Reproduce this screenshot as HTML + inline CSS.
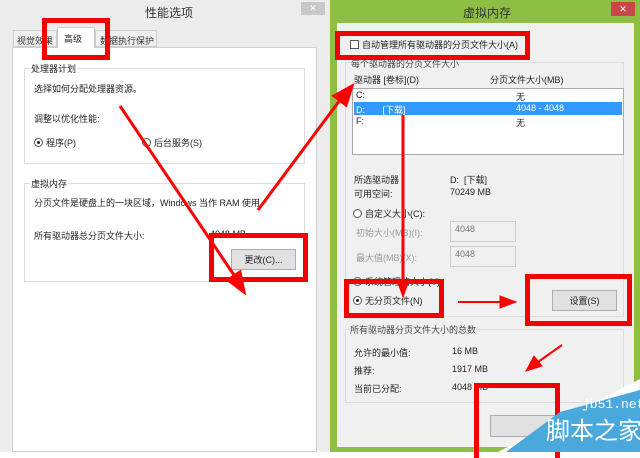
<!DOCTYPE html>
<html><head><meta charset="utf-8"><style>
*{margin:0;padding:0;box-sizing:border-box}
body{width:640px;height:452px;overflow:hidden;position:relative;background:#fff;font-family:"Liberation Sans","Noto Sans CJK SC",sans-serif;font-size:9px;color:#222}
.a{position:absolute;white-space:nowrap}
.gb{position:absolute;border:1px solid #dcdcdc}
.btn{position:absolute;background:#e1e1e1;border:1px solid #adadad;text-align:center;line-height:20px}
.rad{position:absolute;width:9px;height:9px;border:1px solid #555;border-radius:50%;background:#fff}
.rad.on::after{content:"";position:absolute;left:2px;top:2px;width:3px;height:3px;border-radius:50%;background:#222}
.red{position:absolute;border:5px solid #f20000}
.inp{position:absolute;border:1px solid #ccc;background:#f0f0f0;color:#777;padding:2px 4px}
</style></head><body>
<div class="a" style="left:0;top:0;width:330px;height:452px;background:#ececec"></div>
<div class="a" style="left:145px;top:4px;font-size:12px;color:#333">性能选项</div>
<div class="a" style="left:301px;top:2px;width:24px;height:13px;background:#c8c8c8;color:#fff;text-align:center;font-size:9px;line-height:13px">✕</div>
<div class="a" style="left:13px;top:30px;width:44px;height:17px;border:1px solid #ccc;background:#f0f0f0;padding:3px 3px;color:#333">视觉效果</div>
<div class="a" style="left:95px;top:30px;width:62px;height:17px;border:1px solid #ccc;background:#f0f0f0;padding:3px 4px;color:#333">数据执行保护</div>
<div class="a" style="left:12px;top:47px;width:305px;height:405px;background:#fff;border:1px solid #d0d0d0"></div>
<div class="a" style="left:57px;top:27px;width:38px;height:21px;background:#fff;border:1px solid #ccc;border-bottom:none;padding:4px 6px">高级</div>
<div class="gb" style="left:24px;top:68px;width:281px;height:96px;background:#fff"></div>
<div class="a" style="left:30px;top:62px;background:#fff;padding:0 1px">处理器计划</div>
<div class="a" style="left:34px;top:82px">选择如何分配处理器资源。</div>
<div class="a" style="left:34px;top:112px">调整以优化性能:</div>
<div class="rad on" style="left:34px;top:138px"></div><div class="a" style="left:46px;top:136px">程序(P)</div>
<div class="rad" style="left:142px;top:138px"></div><div class="a" style="left:154px;top:136px">后台服务(S)</div>
<div class="gb" style="left:24px;top:183px;width:281px;height:99px;background:#fff"></div>
<div class="a" style="left:30px;top:177px;background:#fff;padding:0 1px">虚拟内存</div>
<div class="a" style="left:34px;top:196px">分页文件是硬盘上的一块区域，Windows 当作 RAM 使用。</div>
<div class="a" style="left:34px;top:229px">所有驱动器总分页文件大小:</div>
<div class="a" style="left:210px;top:229px">4048 MB</div>
<div class="btn" style="left:231px;top:249px;width:65px;height:21px">更改(C)...</div>
<div class="red" style="left:42px;top:18px;width:68px;height:42px"></div>
<div class="red" style="left:209px;top:233px;width:99px;height:49px"></div>

<div class="a" style="left:330px;top:0;width:310px;height:452px;background:#8dbf45"></div>
<div class="a" style="left:463px;top:4px;font-size:12px;color:#333">虚拟内存</div>
<div class="a" style="left:611px;top:2px;width:24px;height:14px;background:#c9464a;color:#fff;text-align:center;font-size:9px;line-height:14px">✕</div>
<div class="a" style="left:337px;top:23px;width:297px;height:424px;background:#f0f0f0"></div>
<div class="a" style="left:350px;top:40px;width:9px;height:9px;border:1px solid #555;background:#fff"></div>
<div class="a" style="left:362px;top:38px">自动管理所有驱动器的分页文件大小(A)</div>
<div class="gb" style="left:345px;top:62px;width:279px;height:255px"></div>
<div class="a" style="left:351px;top:57px;background:#f0f0f0;color:#444">每个驱动器的分页文件大小</div>
<div class="a" style="left:354px;top:73px">驱动器 [卷标](D)</div>
<div class="a" style="left:490px;top:73px">分页文件大小(MB)</div>
<div class="a" style="left:352px;top:88px;width:272px;height:67px;background:#fff;border:1px solid #aaa"></div>
<div class="a" style="left:354px;top:102px;width:268px;height:13px;background:#3399ff"></div>
<div class="a" style="left:356px;top:90px">C:</div><div class="a" style="left:516px;top:90px">无</div>
<div class="a" style="left:356px;top:103px;color:#fff">D:&nbsp;&nbsp;&nbsp;&nbsp;&nbsp;&nbsp;&nbsp;[下载]</div><div class="a" style="left:516px;top:103px;color:#fff">4048 - 4048</div>
<div class="a" style="left:356px;top:116px">F:</div><div class="a" style="left:516px;top:116px">无</div>
<div class="a" style="left:354px;top:173px">所选驱动器</div><div class="a" style="left:450px;top:173px">D:&nbsp; [下载]</div>
<div class="a" style="left:354px;top:187px">可用空间:</div><div class="a" style="left:450px;top:187px">70249 MB</div>
<div class="rad" style="left:353px;top:209px"></div><div class="a" style="left:365px;top:207px">自定义大小(C):</div>
<div class="a" style="left:356px;top:226px;color:#999">初始大小(MB)(I):</div><div class="inp" style="left:450px;top:221px;width:66px;height:21px">4048</div>
<div class="a" style="left:356px;top:251px;color:#999">最大值(MB)(X):</div><div class="inp" style="left:450px;top:246px;width:66px;height:21px">4048</div>
<div class="rad" style="left:353px;top:277px"></div><div class="a" style="left:365px;top:275px">系统管理的大小(Y)</div>
<div class="rad on" style="left:353px;top:296px"></div><div class="a" style="left:365px;top:294px">无分页文件(N)</div>
<div class="btn" style="left:552px;top:290px;width:65px;height:21px">设置(S)</div>
<div class="gb" style="left:345px;top:329px;width:279px;height:74px"></div>
<div class="a" style="left:350px;top:323px;background:#f0f0f0;color:#444">所有驱动器分页文件大小的总数</div>
<div class="a" style="left:354px;top:346px">允许的最小值:</div><div class="a" style="left:452px;top:346px">16 MB</div>
<div class="a" style="left:354px;top:364px">推荐:</div><div class="a" style="left:452px;top:364px">1917 MB</div>
<div class="a" style="left:354px;top:382px">当前已分配:</div><div class="a" style="left:452px;top:382px">4048 MB</div>
<div class="btn" style="left:490px;top:415px;width:65px;height:22px"></div>
<div class="red" style="left:335px;top:31px;width:195px;height:29px"></div>
<div class="red" style="left:344px;top:279px;width:100px;height:39px"></div>
<div class="red" style="left:525px;top:274px;width:107px;height:52px"></div>
<div class="red" style="left:474px;top:383px;width:86px;height:75px;border-bottom:none"></div>

<svg class="a" style="left:0;top:0" width="640" height="452">
<g stroke="#f00" stroke-width="3" fill="#f00">
<line x1="120" y1="106" x2="236" y2="278"/><polygon points="244,292 228,280 240,272"/>
<line x1="258" y1="210" x2="340" y2="100"/><polygon points="352,86 334,96 346,105"/>
<line x1="403" y1="115" x2="403" y2="282"/><polygon points="403,297 397,280 409,280" stroke-width="1"/>
<line x1="458" y1="302" x2="502" y2="302" stroke-width="2"/><polygon points="516,302 500,296 500,308" stroke-width="1"/>
<line x1="562" y1="345" x2="538" y2="362" stroke-width="2"/><polygon points="526,371 534,356 542,366" stroke-width="1"/>
</g>
<polygon points="498,452 640,379 640,452" fill="#fff"/>
<polygon points="506,452 560,412 640,390 640,452" fill="#4aa9dc"/>
</svg>
<div class="a" style="left:582px;top:397px;font-size:13px;color:#fff;font-family:'Liberation Mono',monospace">jb51.net</div>
<div class="a" style="left:546px;top:418px;font-size:24px;color:#fff;line-height:28px">脚本之家</div>
</body></html>
